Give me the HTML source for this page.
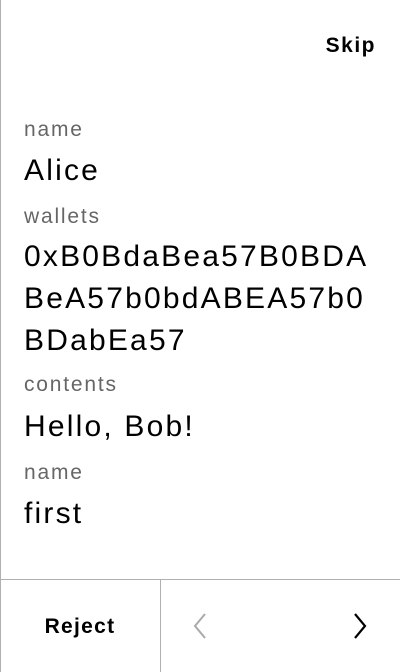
<!DOCTYPE html>
<html><head><style>
body{margin:0;width:400px;height:672px;overflow:hidden;background:#fff;font-family:"Liberation Sans",sans-serif;position:relative}
.lb{position:absolute;left:0;top:0;width:1px;height:672px;background:#b0b0b0}
.skip{position:absolute;right:24px;top:34px;font-size:21px;font-weight:bold;color:#000;letter-spacing:1.5px}
.t{position:absolute;left:24px;white-space:nowrap}
.l{font-size:21px;color:#666;letter-spacing:1.8px}
.v{font-size:30px;color:#000;letter-spacing:2.2px}
.hl{position:absolute;left:0;top:579px;width:400px;height:1px;background:#b0b0b0}
.vl{position:absolute;left:160px;top:580px;width:1px;height:92px;background:#b0b0b0}
.rej{position:absolute;left:0;width:160px;top:615px;text-align:center;font-size:21px;font-weight:bold;letter-spacing:1.3px}
</style></head><body>
<div class="lb"></div>
<div class="skip">Skip</div>
<div class="t l" style="top:118px">name</div>
<div class="t v" style="top:154px">Alice</div>
<div class="t l" style="top:205px">wallets</div>
<div class="t v" style="top:240px">0xB0BdaBea57B0BDA</div>
<div class="t v" style="top:282px">BeA57b0bdABEA57b0</div>
<div class="t v" style="top:324px">BDabEa57</div>
<div class="t l" style="top:373px">contents</div>
<div class="t v" style="top:410px">Hello, Bob!</div>
<div class="t l" style="top:461px">name</div>
<div class="t v" style="top:497px">first</div>
<div class="hl"></div><div class="vl"></div>
<div class="rej">Reject</div>
<svg style="position:absolute;left:190px;top:612px" width="20" height="28"><path d="M15 2 L5 14 L15 26" fill="none" stroke="#aaa" stroke-width="2"/></svg>
<svg style="position:absolute;left:350px;top:612px" width="20" height="28"><path d="M5 2 L15 14 L5 26" fill="none" stroke="#000" stroke-width="2.2"/></svg>
</body></html>
